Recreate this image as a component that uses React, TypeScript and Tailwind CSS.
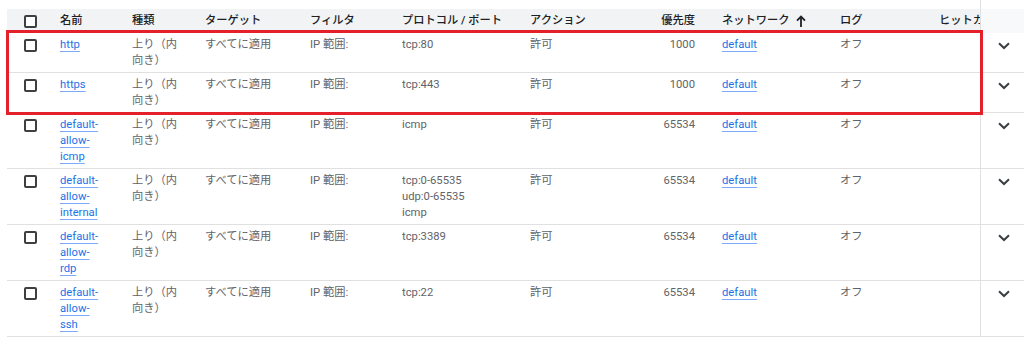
import React from "react";

type Row = {
  name: string;
  protocols: string[];
  priority: string;
};

const rows: Row[] = [
  { name: "http", protocols: ["tcp:80"], priority: "1000" },
  { name: "https", protocols: ["tcp:443"], priority: "1000" },
  { name: "default-allow-icmp", protocols: ["icmp"], priority: "65534" },
  {
    name: "default-allow-internal",
    protocols: ["tcp:0-65535", "udp:0-65535", "icmp"],
    priority: "65534",
  },
  { name: "default-allow-rdp", protocols: ["tcp:3389"], priority: "65534" },
  { name: "default-allow-ssh", protocols: ["tcp:22"], priority: "65534" },
];

function Checkbox() {
  return (
    <div className="w-[13px] h-[13px] border-2 border-[#3c4043] rounded-[2px] bg-white" />
  );
}

function Chevron() {
  return (
    <svg width="12" height="8" viewBox="0 0 12 8" className="block">
      <path d="M1 1.2 L6 6 L11 1.2" fill="none" stroke="#3c4043" strokeWidth="2" />
    </svg>
  );
}

function SortUp() {
  return (
    <svg width="10" height="12" viewBox="0 0 10 12" className="block">
      <path d="M5 12 V2" stroke="#202124" strokeWidth="1.8" fill="none" />
      <path d="M1 5.6 L5 1.5 L9 5.6" stroke="#202124" strokeWidth="1.8" fill="none" />
    </svg>
  );
}

function Link({ children }: { children: React.ReactNode }) {
  return (
    <span className="text-[#1a73e8] underline decoration-[#7baaf7] decoration-1 underline-offset-[3px]">
      {children}
    </span>
  );
}

export default function App() {
  return (
    <div className="relative w-[1024px] h-[355px] bg-white overflow-hidden font-['Roboto','Noto_Sans_CJK_JP',sans-serif] text-[11.25px] leading-[16px] text-[#5f6368]">
      {/* top strip */}
      <div className="flex h-[9px] pl-[7px]">
        <div className="w-[973px]" />
        <div className="w-[44px] border-l border-[#e0e0e0]" />
      </div>

      {/* header */}
      <div className="flex pl-[7px] h-[24px]">
        <div className="w-[973px] flex items-center bg-[#f1f3f4] overflow-hidden whitespace-nowrap text-[#202124] font-medium">
          <div className="w-[53px] shrink-0 pl-[17px]">
            <Checkbox />
          </div>
          <div className="w-[72px] shrink-0">名前</div>
          <div className="w-[73px] shrink-0">種類</div>
          <div className="w-[105px] shrink-0">ターゲット</div>
          <div className="w-[92px] shrink-0">フィルタ</div>
          <div className="w-[128px] shrink-0">プロトコル / ポート</div>
          <div className="w-[90px] shrink-0">アクション</div>
          <div className="w-[102px] shrink-0 pr-[27px] text-right">優先度</div>
          <div className="w-[118px] shrink-0 flex items-center gap-[6px]">
            <span>ネットワーク</span>
            <SortUp />
          </div>
          <div className="w-[99px] shrink-0">ログ</div>
          <div className="w-[41px] shrink-0 overflow-hidden">ヒットカウント</div>
        </div>
        <div className="w-[44px] bg-[#f8f9fa] border-l border-[#e0e0e0]" />
      </div>

      {/* rows */}
      {rows.map((r) => (
        <div key={r.name} className="flex pl-[7px]">
          <div className="w-[973px] flex items-start pt-[4px] pb-[3px] overflow-hidden border-b border-[#e0e0e0]">
            <div className="w-[53px] shrink-0 pl-[17px] pt-[2px]">
              <Checkbox />
            </div>
            <div className="w-[72px] shrink-0 pr-[30px]">
              <Link>{r.name}</Link>
            </div>
            <div className="w-[73px] shrink-0 pr-[22px]">上り（内向き）</div>
            <div className="w-[105px] shrink-0">すべてに適用</div>
            <div className="w-[92px] shrink-0">IP 範囲:</div>
            <div className="w-[128px] shrink-0">
              {r.protocols.map((p) => (
                <div key={p}>{p}</div>
              ))}
            </div>
            <div className="w-[90px] shrink-0">許可</div>
            <div className="w-[102px] shrink-0 pr-[27px] text-right">{r.priority}</div>
            <div className="w-[118px] shrink-0">
              <Link>default</Link>
            </div>
            <div className="w-[99px] shrink-0">オフ</div>
            <div className="w-[41px] shrink-0" />
          </div>
          <div className="w-[44px] border-l border-b border-[#e0e0e0] flex justify-center pt-[9px] pl-[2px]">
            <Chevron />
          </div>
        </div>
      ))}

      {/* red annotation box */}
      <div className="absolute left-[6px] top-[30px] w-[977px] h-[85px] border-[3px] border-[#e4202a] pointer-events-none" />
    </div>
  );
}
